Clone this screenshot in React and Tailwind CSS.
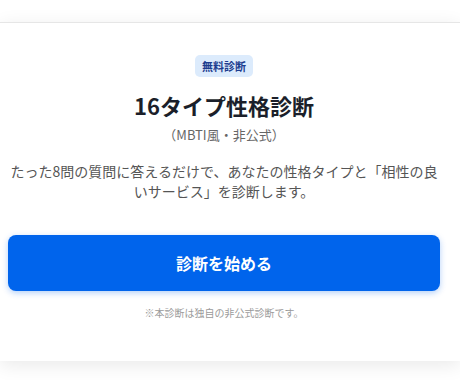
export default function App() {
  return (
    <div
      className="w-[460px] h-[380px] overflow-hidden bg-white pt-[22px]"
      style={{ fontFamily: '"Noto Sans CJK JP", "Noto Sans", sans-serif' }}
    >
      <div className="bg-white border-t border-[#e6e6e6] shadow-[0_4px_18px_rgba(0,0,0,0.09)] pt-[32px] pb-[40px] pl-[8px] pr-[20px] flex flex-col items-center text-center">
        <span className="h-[22px] px-[7px] rounded-[5px] bg-[#dcebfc] text-[#1c3d8f] text-[11px] font-bold leading-[22px]">
          無料診断
        </span>
        <h1 className="mt-[13px] text-[22px] leading-[30px] font-bold text-[#1b1f2a]">
          16タイプ性格診断
        </h1>
        <p className="mt-[5px] text-[13px] leading-[20px] text-[#666666]">
          （MBTI風・非公式）
        </p>
        <p className="mt-[16px] w-full text-[14px] leading-[20px] text-[#555555]">
          たった8問の質問に答えるだけで、あなたの性格タイプと「相性の良いサービス」を診断します。
        </p>
        <button className="mt-[34px] w-full h-[56px] rounded-[8px] bg-[#0064ec] text-white text-[16px] font-bold shadow-[0_2px_6px_rgba(0,100,236,0.3)]">
          診断を始める
        </button>
        <p className="mt-[14px] text-[10px] leading-[16px] text-[#9a9a9a]">
          ※本診断は独自の非公式診断です。
        </p>
      </div>
    </div>
  );
}
